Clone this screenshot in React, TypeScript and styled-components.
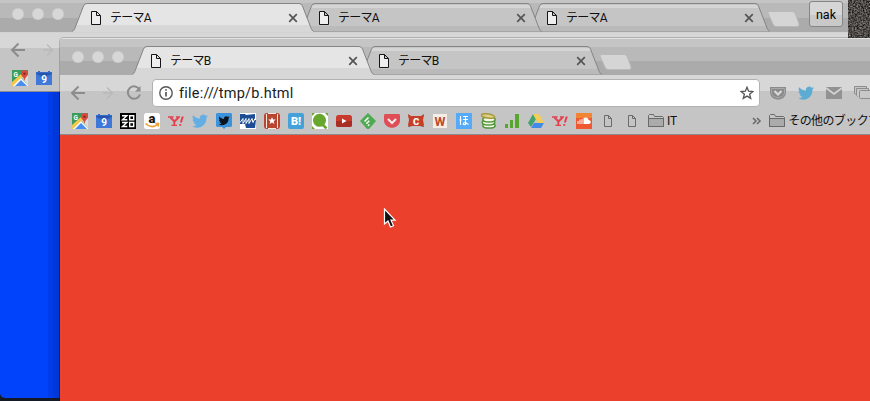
import React from 'react';
import styled, { createGlobalStyle, css } from 'styled-components';

const GlobalStyle = createGlobalStyle`
  * { box-sizing: border-box; }
  html, body { margin: 0; padding: 0; }
  body { width: 870px; height: 401px; overflow: hidden; }
  svg { display: block; flex: none; }
`;

const uiFont = css`
  font-family: Roboto, 'Noto Sans CJK JP', sans-serif;
`;

const Desktop = styled.div`
  ${uiFont}
  position: relative;
  width: 870px;
  height: 401px;
  overflow: hidden;
  background: #141b27;
  color: #111;
`;

const Wallpaper = styled.svg`
  position: absolute;
  top: 0;
  right: 0;
`;

const Window = styled.section<{ $front?: boolean }>`
  position: absolute;
  display: flex;
  flex-direction: column;
  overflow: hidden;
  ${p => p.$front
    ? css`
        left: 60px;
        top: 38px;
        width: 960px;
        height: 400px;
        border-radius: 4px 0 0 0;
        box-shadow: 0 0 0 1px rgba(0, 0, 0, 0.18);
      `
    : css`
        left: 0;
        top: 0;
        width: 848px;
        height: 398px;
        border-radius: 0 0 0 5px;
      `}
`;

const TabStrip = styled.div<{ $front?: boolean }>`
  display: flex;
  flex: none;
  align-items: flex-end;
  position: relative;
  height: ${p => (p.$front ? 37 : 32)}px;
  padding-left: 12px;
  background: ${p => p.$front
    ? 'linear-gradient(#e2e2e2 0 1px, #c5c5c5 1px 9px, #b9b9b9 9px 23px, #ababab 23px)'
    : 'linear-gradient(#c5c5c5 0 3px, #b9b9b9 3px 18px, #ababab 18px)'};
`;

const LightRow = styled.div<{ $top: number }>`
  display: flex;
  gap: 8px;
  width: 60px;
  height: 100%;
  align-items: flex-start;
  padding-top: ${p => p.$top}px;
`;

const Light = styled.span`
  width: 12px;
  height: 12px;
  border-radius: 50%;
  background: #d7d7d7;
  border: 1px dotted #c8c8c8;
`;

const TabBox = styled.div<{ $order: number }>`
  position: relative;
  z-index: ${p => p.$order};
  flex: none;
  width: 242px;
  height: 29px;
  margin-right: -14px;
  padding: 0 16px 0 19px;
  display: flex;
  align-items: center;
`;

const TabShape = styled.svg`
  position: absolute;
  inset: 0;
`;

const TabTitle = styled.span`
  position: relative;
  flex: 1;
  margin-left: 9px;
  font-size: 12px;
  line-height: 18px;
  letter-spacing: -0.75px;
  white-space: nowrap;
`;

const TabIcon = styled.span`
  position: relative;
`;

const NewTab = styled.svg`
  margin: 0 0 5px 11px;
`;

const UserButton = styled.button`
  ${uiFont}
  position: absolute;
  right: 5px;
  top: 1px;
  width: 34px;
  height: 26px;
  padding: 0;
  border: 1px solid #858585;
  border-radius: 3px;
  background: linear-gradient(#d6d6d6 0 55%, #c9c9c9 55%);
  font-size: 12.5px;
  color: #000;
`;

const Controls = styled.div<{ $front?: boolean }>`
  flex: none;
  height: 60px;
  border-top: 1px solid ${p => (p.$front ? '#d7d7d7' : '#d2d2d2')};
  border-bottom: 1px solid #8b8b8b;
  background: linear-gradient(#d7d7d7 0 15px, #c5c5c5 15px);
`;

const Toolbar = styled.div`
  display: flex;
  align-items: center;
  height: 34px;
  padding-left: 10px;
`;

const NavButtons = styled.div`
  display: flex;
  gap: 12px;
  width: 82px;
`;

const AddressBar = styled.div`
  display: flex;
  align-items: center;
  width: 608px;
  height: 28px;
  padding: 0 5px 0 6px;
  border: 1px solid #b2b2b2;
  border-radius: 4px;
  background: #fff;
`;

const Address = styled.span`
  flex: 1;
  margin-left: 6px;
  font-size: 14.5px;
  letter-spacing: 0.22px;
  color: #1c1c1c;
`;

const Extensions = styled.div`
  display: flex;
  gap: 12px;
  margin-left: 10px;
`;

const Bookmarks = styled.div`
  display: flex;
  align-items: center;
  gap: 8px;
  height: 22px;
  padding-left: 12px;
  font-size: 12px;
  line-height: 16px;
  white-space: nowrap;
`;

const Folder = styled.div<{ $offset?: number }>`
  display: flex;
  align-items: center;
  gap: 3px;
  margin-left: ${p => p.$offset ?? 0}px;
`;

const JapaneseLabel = styled.span`
  letter-spacing: -0.6px;
`;

const Page = styled.main<{ $color: string; $shaded?: boolean }>`
  flex: 1;
  background: ${p => p.$shaded
    ? `linear-gradient(90deg, ${p.$color} 0 48px, #003de8 48px 53px, #0038d8 53px 59px, #062b98 59px 60px, ${p.$color} 60px)`
    : p.$color};
`;

const Pointer = styled.svg`
  position: absolute;
  left: 383px;
  top: 208px;
`;

const DocIcon = ({ small }: { small?: boolean }) =>
  small ? (
    <svg width="16" height="16" fill="none" stroke="#6b6b6b">
      <path d="M4.5 2.5h4l3 3v8h-7zM8.5 2.5v3h3" />
    </svg>
  ) : (
    <svg width="10" height="14" fill="#eee" stroke="#151515">
      <path d="M.5.5h5l4 4v9h-9zM5.5.5v4h4" />
    </svg>
  );

const FolderIcon = () => (
  <svg width="16" height="16" stroke="#696969">
    <path d="M.5 13.5v-11l1-1h4l1 2h8l1 1v9z" fill="#c6c6c6" />
    <path d="M.5 13.5v-8h15v8z" fill="#ababab" />
  </svg>
);

const Close = () => (
  <svg width="10" height="10" stroke="#555" strokeWidth="1.7">
    <path d="M1.2 1.2l7.6 7.6M8.8 1.2L1.2 8.8" />
  </svg>
);

const Twitter = ({ color }: { color: string }) => (
  <path
    fill={color}
    d="M16 3.2c-.6.3-1.2.4-1.9.5.7-.4 1.2-1 1.5-1.8-.7.4-1.4.7-2.1.8A3.3 3.3 0 0 0 7.9 5.7C5.2 5.6 2.8 4.3 1.1 2.3c-.9 1.5-.4 3.4 1 4.4-.5 0-1-.1-1.5-.4 0 1.6 1.1 2.9 2.6 3.2-.5.1-1 .1-1.5 0 .4 1.3 1.6 2.3 3.1 2.3A6.600 6.600 0 0 1 0 13.100a9.300 9.300 0 0 0 14.400-8.300c.6-.4 1.200-1 1.600-1.600z"
  />
);

const YahooMark = () => (
  <g fill="none" stroke="#e5404c">
    <path d="M2.500 4.500l4 4M10.500 4.500l-4 4M6.300 8v4" strokeWidth="1.900" />
    <path d="M0 4h5.500M8 4h4M3.500 12.300h5.500" strokeWidth="1.300" />
    <path d="M14.800 3.500l-1.900 6M12.300 11v1.800" strokeWidth="2" />
  </g>
);

const glyphs: Record<string, React.ReactNode> = {
  maps: (
    <>
      <path fill="#3e9b5e" d="M0 0h16v16H0z" />
      <path fill="#dcdcdc" d="M9 7l7 8V5z" />
      <path fill="#f2c84b" d="M0 12L9 4l2 3-9 9H0z" />
      <path fill="#fff" d="M1 16l8-8 7 7v1z" />
      <path fill="#4a8df0" d="M3 16l6-6 6 6z" />
      <path fill="#d9493c" d="M12.500 0A3.500 3.500 0 0 0 9 3.700C9 6 12 7 12.500 11 13 7 16 6 16 3.700A3.500 3.500 0 0 0 12.500 0z" />
      <circle cx="12.500" cy="3.700" r="1.200" fill="#842d2a" />
      <text x="1.500" y="6.500" fontSize="6.500" fontWeight="700" fill="#fff">G</text>
    </>
  ),
  calendar: (
    <>
      <path fill="#326bc9" d="M0 2h2V1h2v1h8V1h2v1h2v13H0z" />
      <path fill="#2554aa" d="M0 3h16L8 7z" />
      <path fill="#3f78d8" d="M0 5l8 3 8-3v10H0z" />
      <text x="8" y="13" fontSize="10" fontWeight="700" fill="#fff" textAnchor="middle">9</text>
    </>
  ),
  zozo: (
    <>
      <path d="M0 0h16v16H0z" />
      <path fill="none" stroke="#fff" strokeWidth="1.400" d="M2 2.700h4.800L2.500 6.700h4.800M2 9.500h4.800L2.500 13.500h4.800M9.700 2.700h4v4h-4zM9.700 9.500h4v4h-4z" />
    </>
  ),
  amazon: (
    <>
      <rect width="16" height="16" rx="2.500" fill="#fff" />
      <text x="8" y="10" fontSize="13" fontWeight="900" fill="#171717" textAnchor="middle">a</text>
      <path fill="none" stroke="#eca13c" strokeWidth="1.700" d="M1.500 10.500c4 4 9 4 12.500.5M11.500 10.500h3l-.5 3" />
    </>
  ),
  yahoo: <YahooMark />,
  twitter: <Twitter color="#63afe5" />,
  tweetbox: (
    <>
      <path fill="#3d92dc" d="M1 0h14l1 1v12l-1 1h-5l-2 2-2-2H1l-1-1V1z" />
      <g transform="translate(2.500 2) scale(.7)"><Twitter color="#09141f" /></g>
    </>
  ),
  scribble: (
    <>
      <path fill="#fff" d="M0 0h16v16H0z" />
      <path fill="#1d4d94" d="M0 1h5l1 1 9-1v6h1l-1 8H6l-1-4H0z" />
      <path fill="none" stroke="#fff" strokeWidth="1" d="M0 9.500l3-4v5l3-5v5l3-5v5l3-5 1 4 2-4" />
    </>
  ),
  book: (
    <>
      <rect width="16" height="16" rx="3" fill="#bb4431" />
      <path fill="#f3e9dc" d="M2 1h1v14H2zM13 1h1v14h-1zM4 0h8v1H4zM4 15h8v1H4z" />
      <path fill="#fff" d="M8 4l1 2.600h2.800L9.600 8.300l.8 2.700L8 9.400 5.600 11l.8-2.700-2.200-1.700H7z" />
    </>
  ),
  hatena: (
    <>
      <rect width="16" height="16" rx="2" fill="#44a1d9" />
      <text x="8" y="12" fontSize="11" fontWeight="900" fill="#fff" textAnchor="middle">B!</text>
    </>
  ),
  qiita: (
    <>
      <path fill="#fff" d="M0 0h16v16H0z" />
      <path fill="#68a72d" d="M0 0h3L0 3zM13 0h3v3zM0 13l3 3H0z" />
      <circle cx="7.500" cy="7.300" r="6.500" fill="#68a72d" />
      <path stroke="#68a72d" strokeWidth="2.500" d="M10.500 11.500l4 4" />
    </>
  ),
  youtube: (
    <>
      <rect y="2" width="16" height="12" rx="2.500" fill="#c93b2d" />
      <path fill="#a92d24" d="M0 8h16v4q0 2-2 2H2q-2 0-2-2z" />
      <path fill="#fff" d="M6 5.500v5L10.500 8z" />
    </>
  ),
  feedly: (
    <>
      <path fill="#4eaa50" d="M8 0l8 8-7 8H7L0 8z" />
      <path fill="none" stroke="#fff" strokeWidth="1.500" d="M4.500 8.500l4-4M6.300 10.800l3-3M8 12.800l1.300-1.300" />
    </>
  ),
  pocket: (
    <>
      <path fill="#df4d57" d="M1 1h14l1 1v6c-1 9-15 9-16 0V2z" />
      <path fill="none" stroke="#eee" strokeWidth="2" d="M4 6l4 4 4-4" />
    </>
  ),
  capture: (
    <>
      <path fill="#91352b" d="M0 1l4 3v9l-4 1 2-6zM16 1l-4 3v9l4 1-2-6z" />
      <path fill="#c83f28" d="M0 2l3 1h10l3-1-1 5 1 5-3 1H3l-3-1 1-5z" />
      <text x="8" y="11.500" fontSize="9.500" fontWeight="900" fill="#fff" textAnchor="middle">C</text>
    </>
  ),
  w: (
    <>
      <path fill="#f4eee5" d="M1 1h14v14H1z" />
      <text x="8" y="13" fontSize="12.500" fontWeight="700" fill="#bc4b2d" textAnchor="middle">W</text>
    </>
  ),
  ho: (
    <>
      <path fill="#55aafa" d="M0 0h16v16H0z" />
      <path fill="none" stroke="#fff" strokeWidth="1.100" d="M4.500 3v9M7 3.500h5M7 6.500h5M9.500 4v7.500c-3 1-3-2 0-2l3 2M3.500 7h2" />
    </>
  ),
  coins: (
    <g fill="#f2f5e5" stroke="#4f9638" strokeWidth="1.500">
      <ellipse cx="9" cy="12.500" rx="6.200" ry="2.600" />
      <ellipse cx="8.500" cy="9.500" rx="6.300" ry="2.500" />
      <ellipse cx="9" cy="6.500" rx="6.200" ry="2.500" />
      <ellipse cx="8" cy="3" rx="6.500" ry="2" transform="rotate(9 8 3)" fill="#ded28a" stroke="#a89a3b" />
    </g>
  ),
  bars: <path fill="#57a72e" d="M1 11h3v4H1zM6 7h3v8H6zM11 1h4v14h-4z" />,
  drive: (
    <>
      <path fill="#43a36d" d="M5 1l3 5-5 8-3-4z" />
      <path fill="#f4cd55" d="M5 1h6l5 9h-6z" />
      <path fill="#4389e8" d="M3 15l3-5h10l-3 5z" />
    </>
  ),
  soundcloud: (
    <>
      <path fill="#ee5932" d="M0 0h16v16H0z" />
      <path fill="#f28435" d="M0 0h16v5H0z" />
      <path fill="#fff" d="M1.500 8h1v3h-1zM3.500 6.500h1V11h-1zM5.500 6h1v5h-1zM7.500 5c3-1.500 5 0 5 2 3 0 3 4 0 4h-5z" />
    </>
  ),
};

const bookmarkOrder = [
  'maps', 'calendar', 'zozo', 'amazon', 'yahoo', 'twitter', 'tweetbox', 'scribble', 'book', 'hatena', 'qiita',
  'youtube', 'feedly', 'pocket', 'capture', 'w', 'ho', 'coins', 'bars', 'drive', 'yahoo', 'soundcloud',
];

const Favicon = ({ name }: { name: string }) => <svg width="16" height="16">{glyphs[name]}</svg>;

const Tab = ({ title, active, order }: { title: string; active?: boolean; order: number }) => (
  <TabBox $order={order}>
    <TabShape width="242" height="29">
      <path d="M0 28.500Q2 28 3 25L11.500 3Q12.500 .5 15 .5H227Q229.500 .5 230.500 3L239 25Q240 28 242 28.500V29H0z" fill={active ? '#e5e5e5' : '#c5c5c5'} />
      {active
        ? <path d="M1.500 28L4 22H238L240.500 28V29H0z" fill="#d7d7d7" />
        : <><path d="M12 2H230L231 5H11z" fill="#d5d5d5" /><path d="M3 26L4 23H238L239.500 26V28H2z" fill="#bababa" /></>}
      <path d="M0 28.500Q2 28 3 25L11.500 3Q12.500 .5 15 .5H227Q229.500 .5 230.500 3L239 25Q240 28 242 28.500" fill="none" stroke="#858585" />
      {!active && <path d="M1 28.500H241" stroke="#a5a5a5" />}
    </TabShape>
    <TabIcon><DocIcon /></TabIcon>
    <TabTitle>{title}</TabTitle>
    <TabIcon><Close /></TabIcon>
  </TabBox>
);

const TabBar = ({ titles, front }: { titles: string[]; front?: boolean }) => (
  <TabStrip $front={front}>
    <LightRow $top={front ? 13 : 8}><Light /><Light /><Light /></LightRow>
    {titles.map((title, i) => <Tab key={i} title={title} active={i === 0} order={9 - i} />)}
    <NewTab width="33" height="16">
      <path d="M3 .5H25Q27 .5 28 2L32 13Q32.500 15.500 30 15.500H9Q7 15.500 6 13L1 2Q.5.5 3 .5z" fill="#d5d5d5" stroke="#b9b9b9" />
    </NewTab>
    {!front && <UserButton>nak</UserButton>}
  </TabStrip>
);

const Nav = () => (
  <NavButtons>
    <svg width="16" height="16" fill="none" stroke="#8c8c8c" strokeWidth="2"><path d="M15 8H2.500M8.500 1.500L2 8l6.500 6.500" /></svg>
    <svg width="16" height="16" fill="none" stroke="#b9b9b9" strokeWidth="1.300"><path d="M5 8h9M9 2.500L14.500 8 9 13.500" /></svg>
    <svg width="16" height="16" fill="none" stroke="#8c8c8c" strokeWidth="2"><path d="M13.500 4.500A6.200 6.200 0 1 0 14 9.500" /><path d="M14.500 1v5.500H9z" fill="#8c8c8c" stroke="none" /></svg>
  </NavButtons>
);

const ExtensionIcons = () => (
  <Extensions>
    <svg width="16" height="16"><path fill="#8b8b8b" d="M0 2h16v5c0 10-16 10-16 0z" /><path fill="none" stroke="#a8a8a8" d="M1.500 3.500h13V8c-1 6-12 6-13 0z" /><path fill="none" stroke="#d9d9d9" strokeWidth="2.200" d="M4.500 6L8 9.500 11.500 6" /></svg>
    <svg width="16" height="16"><Twitter color="#5cabd3" /></svg>
    <svg width="16" height="16"><path fill="#929292" d="M0 2h16v12H0z" /><path d="M0 3l8 6 8-6" fill="none" stroke="#d5d5d5" strokeWidth="1.700" /></svg>
    <svg width="20" height="16" fill="#c8c8c8" stroke="#8d8d8d"><path d="M2.500 9.500l-2-1v-7h12v2M3.500 11.500l-1-1v-7h12v2" /><rect x="5.500" y="5.500" width="12" height="8" rx="1" /></svg>
  </Extensions>
);

export default function App() {
  return (
    <Desktop>
      <GlobalStyle />
      <Wallpaper width="22" height="38">
        <filter id="grain" colorInterpolationFilters="sRGB"><feTurbulence type="fractalNoise" baseFrequency=".65" numOctaves="2" seed="4" /><feColorMatrix values=".8 0 0 0 -.1  .8 0 0 0 -.11  .8 0 0 0 -.12  0 0 0 0 1" /></filter>
        <rect width="22" height="38" filter="url(#grain)" />
      </Wallpaper>
      <Window>
        <TabBar titles={['テーマA', 'テーマA', 'テーマA']} />
        <Controls>
          <Toolbar><Nav /></Toolbar>
          <Bookmarks><Favicon name="maps" /><Favicon name="calendar" /></Bookmarks>
        </Controls>
        <Page $color="#0043fb" $shaded />
      </Window>
      <Window $front>
        <TabBar titles={['テーマB', 'テーマB']} front />
        <Controls $front>
          <Toolbar>
            <Nav />
            <AddressBar>
              <svg width="14" height="14" fill="none" stroke="#555" strokeWidth="1.400"><circle cx="7" cy="7" r="6.200" /><path d="M7 6v4.500M7 3.300v1.500" strokeWidth="1.700" /></svg>
              <Address>file:///tmp/b.html</Address>
              <svg width="14" height="14" fill="none" stroke="#555" strokeWidth="1.300"><path d="M7 1.200l1.600 4 4.300.3-3.300 2.700 1.100 4.200L7 10.100l-3.700 2.300 1.100-4.200-3.300-2.700 4.300-.3z" /></svg>
            </AddressBar>
            <ExtensionIcons />
          </Toolbar>
          <Bookmarks>
            {bookmarkOrder.map((name, i) => <Favicon key={i} name={name} />)}
            <DocIcon small /><DocIcon small />
            <Folder><FolderIcon />IT</Folder>
            <Folder $offset={67}>
              <svg width="10" height="16" fill="none" stroke="#6b6b6b" strokeWidth="1.600"><path d="M1 5l3 3-3 3M5 5l3 3-3 3" /></svg>
            </Folder>
            <Folder $offset={-1}><FolderIcon /><JapaneseLabel>その他のブックマーク</JapaneseLabel></Folder>
          </Bookmarks>
        </Controls>
        <Page $color="#eb412c" />
      </Window>
      <Pointer width="16" height="22" viewBox="0 0 16 22">
        <path d="M1.500 1v15l3.500-3 2.500 6 3-1.300-2.500-5.500h4z" fill="#111" stroke="#fff" strokeWidth="1.200" />
      </Pointer>
    </Desktop>
  );
}
